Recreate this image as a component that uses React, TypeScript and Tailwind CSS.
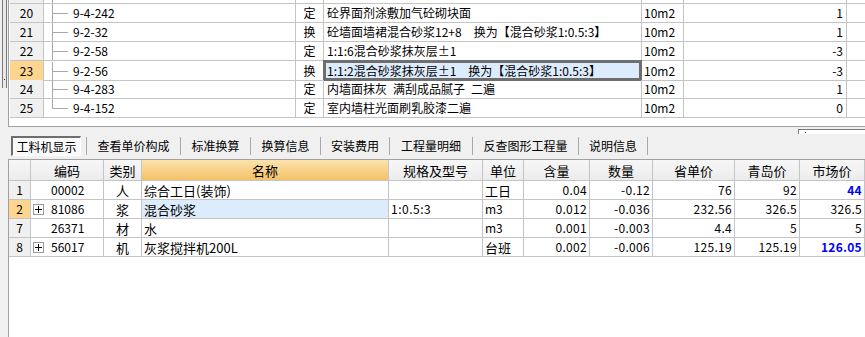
import React from 'react';

type TopRow = { no: string; code: string; type: string; name: string; unit: string; qty: string; last?: boolean };

// 半角空格在 Noto 里太窄，用 en space 对齐原图
const topRows: TopRow[] = [
  { no: '20', code: '9-4-242', type: '定', name: '砼界面剂涂敷加气砼砌块面', unit: '10m2', qty: '1' },
  { no: '21', code: '9-2-32', type: '换', name: '砼墙面墙裙混合砂浆12+8\u2002\u2002换为【混合砂浆1:0.5:3】', unit: '10m2', qty: '1' },
  { no: '22', code: '9-2-58', type: '定', name: '1:1:6混合砂浆抹灰层±1', unit: '10m2', qty: '-3' },
  { no: '23', code: '9-2-56', type: '换', name: '1:1:2混合砂浆抹灰层±1\u2002\u2002换为【混合砂浆1:0.5:3】', unit: '10m2', qty: '-3' },
  { no: '24', code: '9-4-283', type: '定', name: '内墙面抹灰\u2002满刮成品腻子\u2002二遍', unit: '10m2', qty: '1' },
  { no: '25', code: '9-4-152', type: '定', name: '室内墙柱光面刷乳胶漆二遍', unit: '10m2', qty: '0', last: true },
];

const tabs = [
  { label: '查看单价构成', w: 'w-[94px]' },
  { label: '标准换算', w: 'w-[70px]' },
  { label: '换算信息', w: 'w-[70px]' },
  { label: '安装费用', w: 'w-[69px]' },
  { label: '工程量明细', w: 'w-[83px]' },
  { label: '反查图形工程量', w: 'w-[106px]' },
  { label: '说明信息', w: 'w-[69px]' },
];

type MatRow = {
  no: string; plus: boolean; code: string; kind: string; name: string; spec: string; unit: string;
  amt: string; qty: string; prov: string; qd: string; market: string; blue?: boolean; sel?: boolean;
};

const matRows: MatRow[] = [
  { no: '1', plus: false, code: '00002', kind: '人', name: '综合工日(装饰)', spec: '', unit: '工日', amt: '0.04', qty: '-0.12', prov: '76', qd: '92', market: '44', blue: true },
  { no: '2', plus: true, code: '81086', kind: '浆', name: '混合砂浆', spec: '1:0.5:3', unit: 'm3', amt: '0.012', qty: '-0.036', prov: '232.56', qd: '326.5', market: '326.5', sel: true },
  { no: '7', plus: false, code: '26371', kind: '材', name: '水', spec: '', unit: 'm3', amt: '0.001', qty: '-0.003', prov: '4.4', qd: '5', market: '5' },
  { no: '8', plus: true, code: '56017', kind: '机', name: '灰浆搅拌机200L', spec: '', unit: '台班', amt: '0.002', qty: '-0.006', prov: '125.19', qd: '125.19', market: '126.05', blue: true },
];

const topCols = 'grid grid-cols-[34px_252px_28px_318px_42px_163px_1fr]';
const matCols = 'grid grid-cols-[22px_73px_38px_247px_94px_41px_66px_63px_82px_65px_1fr]';
const cell = 'border-r border-b border-[#c4c4c4] flex items-center overflow-hidden whitespace-pre';

const TreeLine = ({ last }: { last?: boolean }) => (
  <svg width="20" height="18" className="shrink-0">
    <line x1="0.5" y1="0" x2="0.5" y2={last ? 9.5 : 18} stroke="#a8a8a8" />
    <line x1="0" y1="9.5" x2="16" y2="9.5" stroke="#a8a8a8" />
  </svg>
);

const PlusBox = () => (
  <span className="w-[11px] h-[11px] border border-[#9a9a9a] bg-white flex items-center justify-center shrink-0">
    <svg width="7" height="7">
      <line x1="0" y1="3.5" x2="7" y2="3.5" stroke="#000" />
      <line x1="3.5" y1="0" x2="3.5" y2="7" stroke="#000" />
    </svg>
  </span>
);

export default function App() {
  return (
    <div className="w-[865px] h-[337px] overflow-hidden bg-[#f0f0f0] text-[12px] leading-none text-black font-['Noto_Sans_CJK_SC',sans-serif]">
      {/* 定额列表 */}
      <div className="flex h-[127px]">
        <div className="w-[8px] shrink-0">
          <div className="ml-[2px] w-[5px] h-[88px] border-x border-[#7a7a7a] bg-[#e8e8e8] flex items-end">
            <span className="w-[1px] h-[1px] bg-[#2020c0] mb-[8px] ml-[1px]" />
          </div>
        </div>
        <div className="flex-1 bg-white border-l border-b border-[#a0a0a0] pl-[1px] overflow-hidden">
          <div className={`${topCols} h-[4px]`}>
            <div className="bg-[#f0f0f0] border-r border-b border-[#c4c4c4]" />
            <div className="border-r border-b border-[#c4c4c4] pl-[8px]">
              <div className="h-full border-l border-[#a8a8a8]" />
            </div>
            <div className="border-r border-b border-[#c4c4c4]" />
            <div className="border-r border-b border-[#c4c4c4]" />
            <div className="border-r border-b border-[#c4c4c4]" />
            <div className="border-r border-b border-[#c4c4c4]" />
            <div className="border-b border-[#c4c4c4]" />
          </div>
          {topRows.map((r) => {
            const sel = r.no === '23';
            return (
              <div key={r.no} className={`${topCols} h-[19px]`}>
                <div className={`${cell} justify-center ${sel ? 'bg-[#fdd58f]' : 'bg-[#f0f0f0]'}`}>{r.no}</div>
                <div className={`${cell} pl-[8px]`}>
                  <TreeLine last={r.last} />
                  <span className="ml-[1px]">{r.code}</span>
                </div>
                <div className={`${cell} justify-center`}>{r.type}</div>
                {sel ? (
                  <div className="border-[3px] border-[#6e6e6e] bg-[#ddecfc] flex items-center whitespace-pre overflow-hidden pl-[1px] -mt-[1px] h-[21px] -ml-[1px]">
                    {r.name}
                  </div>
                ) : (
                  <div className={`${cell} pl-[3px]`}>{r.name}</div>
                )}
                <div className={`${cell} pl-[2px]`}>{r.unit}</div>
                <div className={`${cell} justify-end pr-[3px]`}>{r.qty}</div>
                <div className="border-b border-[#c4c4c4]" />
              </div>
            );
          })}
        </div>
      </div>

      {/* 滚动条 */}
      <div className="h-[9px] flex justify-end items-start pt-[2px]">
        <div className="w-[67px] h-[5px] border-t border-l border-[#7a7a7a] bg-white flex items-center">
          <span className="w-[1px] h-[1px] bg-[#2020c0] ml-[6px]" />
        </div>
      </div>

      {/* 标签页 */}
      <div className="h-[20px] flex items-stretch">
        <div className="w-[87px] flex items-stretch border-r border-[#a8a8a8] my-[1px] pl-[11px] pr-[5px]">
          <div className="flex-1 -my-[1px] flex items-center justify-center border-t-2 border-l-2 border-[#6e6e6e] border-b border-r border-b-white border-r-white bg-[#fafafa]">
            工料机显示
          </div>
        </div>
        {tabs.map((t) => (
          <div key={t.label} className={`${t.w} my-[1px] border-r border-[#a8a8a8] flex items-center justify-center`}>
            {t.label}
          </div>
        ))}
      </div>

      {/* 工料机表 */}
      <div className="mt-[3px] ml-[8px] h-[178px] bg-white border-l border-t border-[#a0a0a0] overflow-hidden">
        <div className={`${matCols} h-[21px]`}>
          {['', '编码', '类别', '名称', '规格及型号', '单位', '含量', '数量', '省单价', '青岛价', '市场价'].map((h) => (
            <div
              key={h || 'no'}
              className={`${cell} justify-center text-[13px] ${
                h === '名称' ? 'bg-gradient-to-b from-[#fce3ad] to-[#f4c165]' : 'bg-gradient-to-b from-[#f7f7f7] to-[#ececec]'
              }`}
            >
              {h}
            </div>
          ))}
        </div>
        {matRows.map((r) => (
          <div key={r.no} className={`${matCols} h-[19px]`}>
            <div className={`${cell} justify-center ${r.sel ? 'bg-[#fdd58f]' : 'bg-[#f0f0f0]'}`}>{r.no}</div>
            <div className={`${cell} pl-[2px] gap-[7px]`}>
              {r.plus ? <PlusBox /> : <span className="w-[11px] shrink-0" />}
              <span>{r.code}</span>
            </div>
            <div className={`${cell} justify-center text-[13px]`}>{r.kind}</div>
            <div className={`${cell} pl-[2px] text-[13px] ${r.sel ? 'bg-[#ddecfc]' : ''}`}>{r.name}</div>
            <div className={`${cell} pl-[2px] tracking-[0.5px]`}>{r.spec}</div>
            <div className={`${cell} pl-[2px] ${r.unit === 'm3' ? '' : 'text-[13px]'}`}>{r.unit}</div>
            <div className={`${cell} justify-end pr-[2px] tracking-[0.3px]`}>{r.amt}</div>
            <div className={`${cell} justify-end pr-[2px] tracking-[0.3px]`}>{r.qty}</div>
            <div className={`${cell} justify-end pr-[2px] tracking-[0.3px]`}>{r.prov}</div>
            <div className={`${cell} justify-end pr-[2px] tracking-[0.3px]`}>{r.qd}</div>
            <div className={`${cell} justify-end pr-[2px] tracking-[0.3px] ${r.blue ? 'text-[#0000ff] font-bold' : ''}`}>{r.market}</div>
          </div>
        ))}
      </div>
    </div>
  );
}
